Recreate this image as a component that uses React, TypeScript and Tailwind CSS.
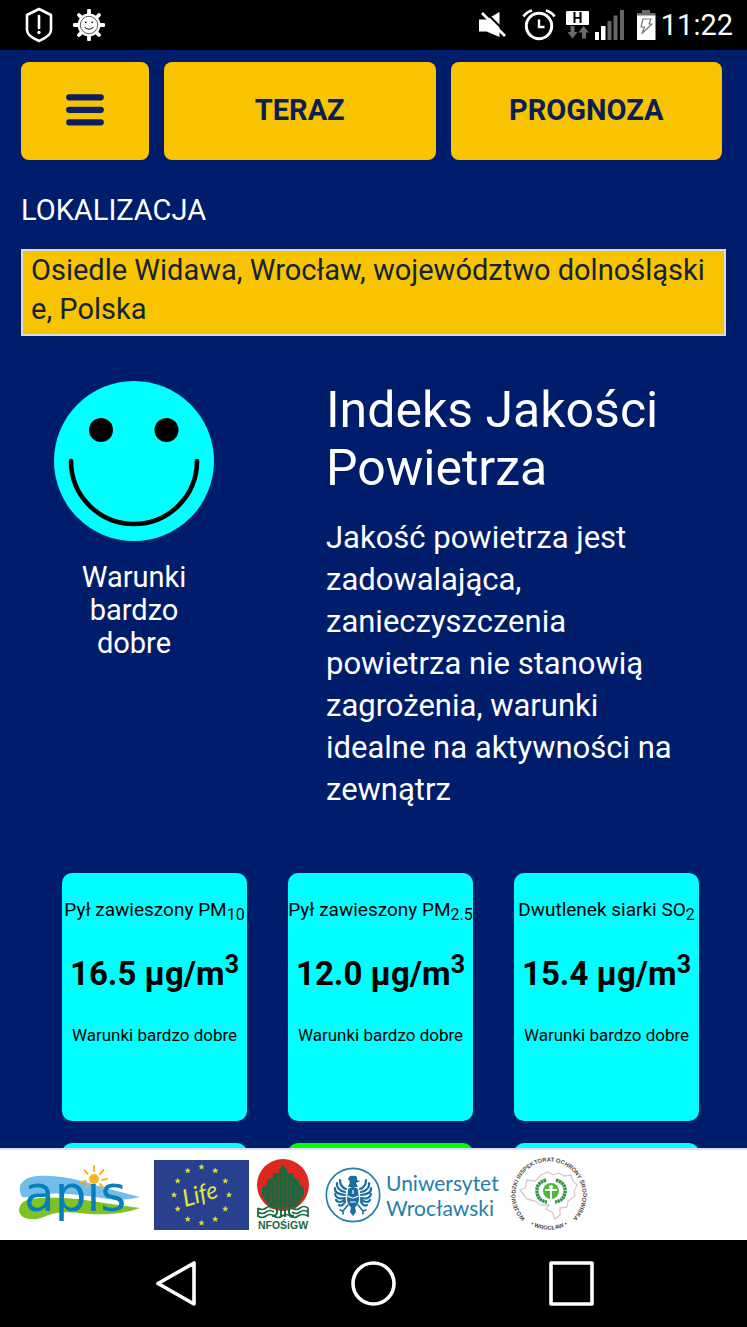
import React from "react";

type Measurement = {
  name: string;
  sub: string;
  value: string;
  status: string;
};

const measurements: Measurement[] = [
  { name: "Pył zawieszony PM", sub: "10", value: "16.5", status: "Warunki bardzo dobre" },
  { name: "Pył zawieszony PM", sub: "2.5", value: "12.0", status: "Warunki bardzo dobre" },
  { name: "Dwutlenek siarki SO", sub: "2", value: "15.4", status: "Warunki bardzo dobre" },
];

function StatusBar() {
  return (
    <div className="flex h-[50px] shrink-0 items-center justify-between bg-black pr-[14px] pl-[25px] text-white">
      <div className="flex items-center gap-5">
        <svg width="28" height="36" viewBox="0 0 28 36" fill="none" aria-hidden="true">
          <path d="M14 2 26 8V23Q26 29 14 34Q2 29 2 23V8Z" stroke="#fff" strokeWidth="2.6" strokeLinejoin="round" />
          <path d="M14 9V21" stroke="#fff" strokeWidth="2.6" strokeLinecap="round" />
          <circle cx="14" cy="25.5" r="1.7" fill="#fff" />
        </svg>
        <svg width="32" height="32" viewBox="0 0 32 32" fill="none" aria-hidden="true">
          <path d="M16 1.5V30.5M1.5 16H30.5M6 6 26 26M26 6 6 26" stroke="#fff" strokeWidth="3.8" strokeLinecap="round" />
          <circle cx="16" cy="16" r="11.4" fill="#fff" />
          <circle cx="16" cy="16" r="8.7" stroke="#333" strokeWidth="0.8" />
          <circle cx="12.8" cy="13.3" r="0.9" fill="#111" />
          <circle cx="19.2" cy="13.3" r="0.9" fill="#111" />
          <path d="M11.8 18.5Q16 22 20.2 18.5" stroke="#111" strokeWidth="1" strokeLinecap="round" />
        </svg>
      </div>
      <div className="flex items-center">
        <svg className="mr-[14px]" width="29" height="28" viewBox="0 0 29 28" fill="none" aria-hidden="true">
          <path d="M0 8.5H7.5L20.5 1V26L7.5 20.5H0Z" fill="#fff" />
          <path d="M5.5 0 29 23.5" stroke="#000" strokeWidth="2" />
          <path d="M3 2 26 25" stroke="#fff" strokeWidth="2.6" />
        </svg>
        <svg className="mr-[10px]" width="34" height="32" viewBox="0 0 34 32" fill="none" aria-hidden="true">
          <circle cx="17" cy="17" r="12.7" stroke="#fff" strokeWidth="3" />
          <path d="M1.5 7.5Q4.5 3 10 1.5M24 1.5Q29.5 3 32.5 7.5" stroke="#fff" strokeWidth="2.8" />
          <path d="M17 10.5V18H22.5" stroke="#fff" strokeWidth="2.4" />
        </svg>
        <svg className="mr-[6px]" width="23" height="28" viewBox="0 0 23 28" aria-hidden="true">
          <rect width="23" height="14" rx="1" fill="#fff" />
          <text x="11.5" y="12" textAnchor="middle" fontSize="14" fontWeight="700" fontFamily="Roboto, sans-serif" fill="#000">H</text>
          <path d="M4.5 15H8.5V21H11.5L6.5 27.5 1.5 21H4.5ZM20 27.5V21.5H23L17.5 15 12.5 21.5H16V27.5Z" fill="#6b6b6b" />
        </svg>
        <svg className="mr-[12px]" width="29" height="30" viewBox="0 0 29 30" aria-hidden="true">
          <path d="M0 22H4V30H0ZM6 16H10.5V30H6Z" fill="#fff" />
          <path d="M12.5 11H16.5V30H12.5ZM18.5 5.5H22.5V30H18.5ZM25 0H29V30H25Z" fill="#666" />
        </svg>
        <svg className="mr-[5px]" width="20" height="30" viewBox="0 0 20 30" fill="none" aria-hidden="true">
          <path d="M6 0H14V3H19.5V6H1V3H6Z" fill="#6b6b6b" />
          <path d="M1 5.5H19.5V30H1Z" fill="#fff" />
          <path d="M7 9H15L13 14H16L6 23.5 8.5 17H5Z" stroke="#777" strokeWidth="1.2" strokeLinejoin="round" />
        </svg>
        <time className="text-[29px] leading-[50px]">11:22</time>
      </div>
    </div>
  );
}

function Smiley() {
  return (
    <svg width="160" height="160" viewBox="0 0 160 160" fill="none" role="img" aria-label="Warunki bardzo dobre">
      <circle cx="80" cy="80" r="80" fill="#00ffff" />
      <circle cx="47" cy="49" r="12" fill="#000" />
      <circle cx="112.5" cy="49" r="12" fill="#000" />
      <path d="M17 80A63 63 0 0 0 143 80" stroke="#000" strokeWidth="4.6" strokeLinecap="round" />
    </svg>
  );
}

function ApisLogo() {
  return (
    <svg width="124" height="72" viewBox="0 -7 124 72" fill="none" role="img" aria-label="apis">
      <path d="M4 31C-2 20 4 11 20 10C48 8 72 18 95 24Q110 28 122 31Q108 35 90 33C60 28 34 25 14 30Q8 32 4 31Z" fill="#72bdea" />
      <path d="M4 37C10 31 32 31 60 33Q92 38 122 42C106 48 88 49 70 48C48 45 36 46 26 51C8 58-5 48 4 37Z" fill="#7fc225" />
      <text x="6" y="45" fontFamily="'DejaVu Sans', sans-serif" fontSize="50" fill="#087fbd">apıs</text>
      <circle cx="76" cy="13" r="5" fill="#fbb321" />
      <path d="M76 5V0M69.5 8 66.5 4M82 8 85.5 4M84 14 89 13M68 15 63 16M82 18 85.5 22M70.5 18 68 21" stroke="#fbb321" strokeWidth="2" strokeLinecap="round" />
    </svg>
  );
}

const STAR = "M0-2.6.65-.85 2.5-.8 1.05.35 1.55 2.1 0 1.1-1.55 2.1-1.05.35-2.5-.8-.65-.85Z";
const starAngles = [0, 30, 60, 90, 120, 150, 180, 210, 240, 270, 300, 330];

function LifeLogo() {
  return (
    <svg width="95" height="70" viewBox="0 0 95 70" role="img" aria-label="Life">
      <rect width="95" height="70" fill="#29408f" />
      {starAngles.map((angle) => {
        const rad = (angle * Math.PI) / 180;
        return (
          <path
            key={angle}
            d={STAR}
            fill="#e0e63c"
            stroke="#e0e63c"
            strokeWidth="0.6"
            transform={`translate(${47.5 + 27.5 * Math.sin(rad)} ${35 - 28 * Math.cos(rad)})`}
          />
        );
      })}
      <text x="31" y="47" transform="rotate(-16 31 47)" fontFamily="Lato, sans-serif" fontStyle="italic" fontWeight="400" fontSize="24" fill="#e0e63c">
        Life
      </text>
    </svg>
  );
}

function NfosLogo() {
  return (
    <svg width="52" height="72" viewBox="0 0 52 72" fill="none" role="img" aria-label="NFOŚiGW">
      <circle cx="26" cy="26" r="26" fill="#dc291e" />
      <path d="M26 6 30 11V14L36 14V19L42 21V26L47 29V36L40 48H12L5 36V29L10 26V21L16 19V14H22V11Z" fill="#17693f" />
      <path
        d="M26 12V50M22 16V50M30 16V50M18 21V40L20 50M34 21V40L32 50M13 26V38L17 50M39 26V38L35 50M8 32V38L14 50M44 32V38L38 50"
        stroke="#7b4a2c"
        strokeWidth="1"
      />
      <path d="M20 46V54Q19 57 15 57M24 46V58M28 46V58M32 46V54Q33 57 37 57" stroke="#17693f" strokeWidth="2" />
      <path
        d="M1 49Q5 52 9 49T17 49M1 53Q5 56 9 53T17 53M1 57Q5 60 9 57T17 57M35 49Q39 52 43 49T51 49M35 53Q39 56 43 53T51 53M17 57Q21 60 25 57T33 57T41 57T51 57M1 49V58M51 49V58"
        stroke="#17693f"
        strokeWidth="1.7"
      />
      <text x="26" y="70" textAnchor="middle" fontFamily="'Liberation Sans', sans-serif" fontWeight="700" fontSize="10.5" fill="#17693f">NFOŚiGW</text>
    </svg>
  );
}

function UniversityLogo() {
  return (
    <span className="flex items-center gap-[5px]">
      <svg width="56" height="56" viewBox="0 0 56 56" fill="none" aria-hidden="true">
        <circle cx="28" cy="28" r="26.7" stroke="#2480a8" strokeWidth="1.7" />
        <g fill="#1b6f9f">
          <path d="M28 9C31 8 33 10 32 13L35 14 31 16 33 20H23L25 15 23 12C24 9 26 8 28 9Z" />
          <path d="M23 22Q28 18 33 22L34 33Q33 39 28 42Q23 39 22 33Z" />
          <path d="M26 40H30L31 45 28 49 25 45Z" />
        </g>
        <g stroke="#1b6f9f" strokeWidth="2.2" strokeLinecap="round">
          <path d="M21 22Q15 20 15 13M20 25Q11 23 12 16M20 28Q9 27 10 21M20 31Q11 33 10 27M20 33Q13 37 11 33M20 35Q17 40 14 38" />
          <path d="M35 22Q41 20 41 13M36 25Q45 23 44 16M36 28Q47 27 46 21M36 31Q45 33 46 27M36 33Q43 37 45 33M36 35Q39 40 42 38" />
          <path d="M23 38 18 44M33 38 38 44M18 44 15 43M18 44V47M38 44 41 43M38 44V47" strokeWidth="1.6" />
        </g>
        <path d="M23 29Q28 33 33 29M28 23V27M25 35H31" stroke="#fff" strokeWidth="1.2" />
      </svg>
      <span className="flex flex-col font-['Lato'] text-[21px] leading-[25px] text-[#2480a8]">
        <span>Uniwersytet</span>
        <span>Wrocławski</span>
      </span>
    </span>
  );
}

function InspectorateLogo() {
  return (
    <svg width="84" height="84" viewBox="-3 -4 84 84" fill="none" role="img" aria-label="Wojewódzki Inspektorat Ochrony Środowiska">
      <defs>
        <path id="ring-top" d="M15.3 61.7A33.5 33.5 0 1 1 62.7 61.7" />
        <path id="ring-bottom" d="M14 63A37 37 0 0 0 64 63" />
      </defs>
      <text fontFamily="'Liberation Sans', sans-serif" fontWeight="700" fontSize="5.8" fill="#4b4b4b">
        <textPath href="#ring-top" startOffset="50%" textAnchor="middle">WOJEWÓDZKI INSPEKTORAT OCHRONY ŚRODOWISKA</textPath>
        <textPath href="#ring-bottom" startOffset="50%" textAnchor="middle">• WROCŁAW •</textPath>
      </text>
      <path
        d="M10 33 15 31 17 23 25 24 31 18 38 15 43 18 49 16 54 19 61 18 63 24 67 28 64 34 65 39 58 44 57 50 50 51 50 58 45 62 42 55 36 52 39 48 31 48 25 44 17 42 13 37Z"
        stroke="#d6c9ce"
        strokeWidth="1.3"
        strokeLinejoin="round"
      />
      <circle cx="41" cy="34" r="8" fill="#4fb73d" />
      <path d="M36 23Q26 26 27 35T37 45M46 23Q56 26 55 35T45 45" stroke="#2f9148" strokeWidth="3.4" strokeDasharray="2.5 0.5" />
      <circle cx="41" cy="30" r="2" fill="#fff" />
      <path d="M35 33H47M41 33V42" stroke="#fff" strokeWidth="1.9" />
    </svg>
  );
}

export default function App() {
  return (
    <div className="flex h-screen flex-col overflow-hidden bg-[#001d6c] font-['Roboto','Noto_Sans',sans-serif] text-white">
      <StatusBar />

      <main className="min-h-0 flex-1 overflow-y-auto [scrollbar-width:none]">
        <nav className="flex h-[110px] gap-[15px] pt-3 pr-[25px] pl-[21px]">
          <button aria-label="Menu" className="flex h-[98px] w-[128px] shrink-0 items-center justify-center rounded-lg bg-[#f8c301]">
            <svg width="38" height="34" viewBox="0 0 38 34" fill="none" aria-hidden="true">
              <path d="M3.2 3.3H34.8M3.2 15.8H34.8M3.2 28.3H34.8" stroke="#0a1f5c" strokeWidth="6.2" strokeLinecap="round" />
            </svg>
          </button>
          <button className="h-[98px] flex-1 rounded-lg bg-[#f8c301] text-[29px] font-bold text-[#0b1f52]">TERAZ</button>
          <button className="h-[98px] flex-1 rounded-lg bg-[#f8c301] text-[29px] font-bold text-[#0b1f52]">PROGNOZA</button>
        </nav>

        <div className="flex flex-col px-[21px] pt-[30px]">
          <label htmlFor="location" className="text-[29px] leading-[40px]">
            LOKALIZACJA
          </label>
          <textarea
            id="location"
            rows={2}
            spellCheck={false}
            className="mt-[19px] block h-[87px] w-full resize-none overflow-hidden border-2 border-[#dcdcdc] bg-[#f8c301] px-2 text-[29px] leading-[39px] break-all text-[#14233a] outline-none"
            defaultValue="Osiedle Widawa, Wrocław, województwo dolnośląskie, Polska"
          />
        </div>

        <section className="flex gap-[79px] pt-[45px] pr-[60px] pl-[21px]">
          <div className="flex w-[226px] shrink-0 flex-col items-center">
            <Smiley />
            <p className="mt-5 w-[120px] text-center text-[29px] leading-[33px]">Warunki bardzo dobre</p>
          </div>
          <div className="min-w-0 flex-1">
            <h1 className="text-[50px] leading-[58px]">Indeks Jakości Powietrza</h1>
            <p className="mt-5 text-[31px] leading-[42px]">
              Jakość powietrza jest zadowalająca, zanieczyszczenia powietrza nie stanowią zagrożenia, warunki idealne na aktywności na zewnątrz
            </p>
          </div>
        </section>

        <section className="grid grid-cols-3 gap-x-[41px] gap-y-[22px] pt-[62px] pr-12 pb-6 pl-[62px] text-center text-black">
          {measurements.map((m) => (
            <article key={m.name + m.sub} className="h-[248px] rounded-[10px] bg-[#00ffff] whitespace-nowrap">
              <h2 className="flex justify-center pt-6 text-[19px] leading-[26px]">
                <span>
                  {m.name}
                  <sub className="text-[16px]">{m.sub}</sub>
                </span>
              </h2>
              <p className="mt-[31px] text-[33px] leading-[40px] font-bold">
                {m.value} µg/m<sup className="text-[25px]">3</sup>
              </p>
              <p className="mt-[30px] text-[17px] leading-[22px]">{m.status}</p>
            </article>
          ))}
          <article className="h-[248px] rounded-[10px] bg-[#00ffff]" />
          <article className="h-[248px] rounded-[10px] bg-[#00ff00]" />
          <article className="h-[248px] rounded-[10px] bg-[#00ffff]" />
        </section>
      </main>

      <footer className="flex h-[92px] shrink-0 items-center border-t-2 border-[#dbe1ef] bg-white pl-[18px]">
        <a href="#apis" className="mr-3 shrink-0"><ApisLogo /></a>
        <a href="#life" className="mr-2 shrink-0"><LifeLogo /></a>
        <a href="#nfosigw" className="mr-4 shrink-0"><NfosLogo /></a>
        <a href="#uniwersytet" className="mr-2 shrink-0"><UniversityLogo /></a>
        <a href="#inspektorat" className="shrink-0"><InspectorateLogo /></a>
      </footer>

      <div className="flex h-[87px] shrink-0 items-center justify-center gap-[153px] bg-black">
        <button aria-label="Wstecz">
          <svg width="45" height="45" viewBox="0 0 45 45" fill="none" aria-hidden="true">
            <path d="M41 2V43L5 22.5Z" stroke="#fff" strokeWidth="3.6" strokeLinejoin="round" />
          </svg>
        </button>
        <button aria-label="Ekran główny">
          <svg width="45" height="45" viewBox="0 0 45 45" fill="none" aria-hidden="true">
            <circle cx="22.5" cy="22.5" r="20.5" stroke="#fff" strokeWidth="3.6" />
          </svg>
        </button>
        <button aria-label="Ostatnie aplikacje">
          <svg width="45" height="45" viewBox="0 0 45 45" fill="none" aria-hidden="true">
            <rect x="2" y="2" width="41" height="41" stroke="#fff" strokeWidth="3.6" strokeLinejoin="round" />
          </svg>
        </button>
      </div>
    </div>
  );
}
